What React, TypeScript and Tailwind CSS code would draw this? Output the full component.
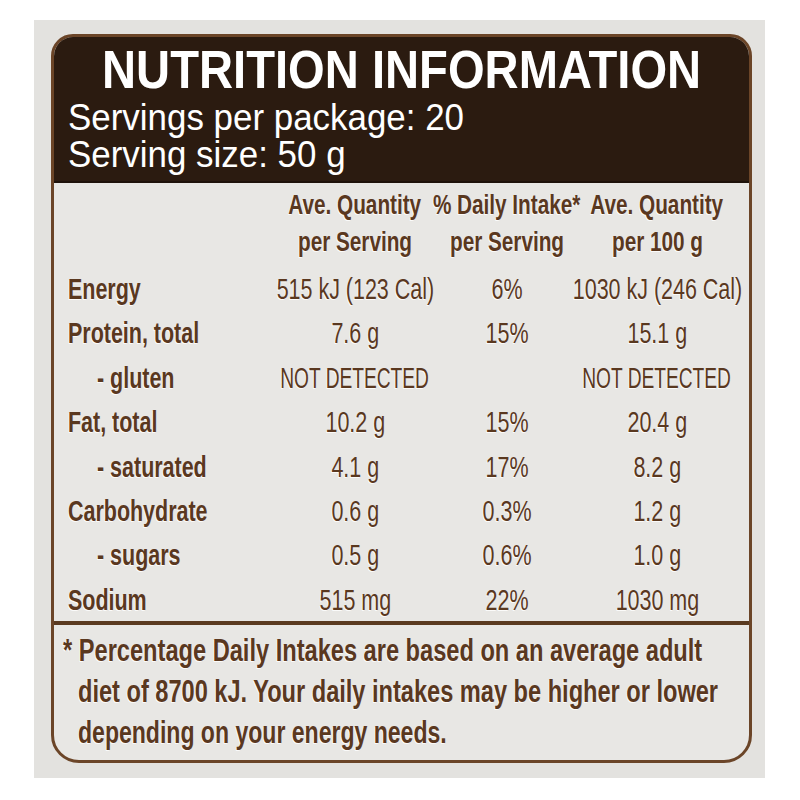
import type { ReactNode } from "react";

const rows = [
  { name: "Energy", indent: false, serving: "515 kJ (123 Cal)", daily: "6%", per100: "1030 kJ (246 Cal)" },
  { name: "Protein, total", indent: false, serving: "7.6 g", daily: "15%", per100: "15.1 g" },
  { name: "- gluten", indent: true, serving: "NOT DETECTED", daily: "", per100: "NOT DETECTED" },
  { name: "Fat, total", indent: false, serving: "10.2 g", daily: "15%", per100: "20.4 g" },
  { name: "- saturated", indent: true, serving: "4.1 g", daily: "17%", per100: "8.2 g" },
  { name: "Carbohydrate", indent: false, serving: "0.6 g", daily: "0.3%", per100: "1.2 g" },
  { name: "- sugars", indent: true, serving: "0.5 g", daily: "0.6%", per100: "1.0 g" },
  { name: "Sodium", indent: false, serving: "515 mg", daily: "22%", per100: "1030 mg" },
];

const footnote = [
  { text: "* Percentage Daily Intakes are based on an average adult", cls: "pl-[9px]", scale: "scale-x-[0.738]" },
  { text: "diet of 8700 kJ. Your daily intakes may be higher or lower", cls: "pl-[24px]", scale: "scale-x-[0.737]" },
  { text: "depending on your energy needs.", cls: "pl-[24px]", scale: "scale-x-[0.72]" },
];

const cols = "grid grid-cols-[212px_150px_154px_146px]";
const ink = "text-[#5a381f] [text-shadow:-1px_1px_0_rgba(255,255,255,0.85)]";

// condensed face isn't installed, so squeeze Liberation Sans sideways
function Narrow({ children, left = false }: { children: ReactNode; left?: boolean }) {
  const caps = children === "NOT DETECTED";
  return (
    <span
      className={`inline-block whitespace-nowrap ${caps ? "scale-x-[0.66]" : "scale-x-[0.74]"} ${
        left ? "origin-left" : "origin-center"
      }`}
    >
      {children}
    </span>
  );
}

function Cell({ children }: { children: ReactNode }) {
  return (
    <div className="flex justify-center">
      <Narrow>{children}</Narrow>
    </div>
  );
}

export default function App() {
  return (
    <div className="h-[800px] w-[800px] bg-white pl-[34px] pt-[20px] font-['Liberation_Sans',Arial,sans-serif]">
      <div className="h-[758px] w-[731px] bg-[#e3e2df] pl-[17px] pt-[14px]">
        <div className="flex h-[729px] w-[701px] flex-col overflow-hidden rounded-t-[22px] rounded-b-[28px] border-[3px] border-[#6b4528] bg-[#e8e7e4]">
          <div className="h-[146px] border-b-[2px] border-[#1e120a] bg-[#2b1b10] pl-[14px] pt-[6px] text-white">
            <div className="flex justify-center pr-[14px]">
              <h1 className="inline-block origin-center scale-x-[0.89] whitespace-nowrap text-[53px] font-bold leading-[53px]">
                NUTRITION INFORMATION
              </h1>
            </div>
            <p className="mt-[3px] origin-left scale-x-[0.97] whitespace-nowrap text-[36px] leading-[37px]">Servings per package: 20</p>
            <p className="origin-left scale-x-[0.97] whitespace-nowrap text-[36px] leading-[37px]">Serving size: 50 g</p>
          </div>

          <div className={`pl-[14px] ${ink}`}>
            <div className={`${cols} pt-[3px] text-[28px] font-bold leading-[37px]`}>
              <div />
              <div>
                <Cell>Ave. Quantity</Cell>
                <Cell>per Serving</Cell>
              </div>
              <div>
                <Cell>% Daily Intake*</Cell>
                <Cell>per Serving</Cell>
              </div>
              <div>
                <Cell>Ave. Quantity</Cell>
                <Cell>per 100 g</Cell>
              </div>
            </div>
            <div className="mt-[7px]">
              {rows.map((r) => (
                <div key={r.name} className={`${cols} h-[44.4px] text-[29px] leading-[44px]`}>
                  <div className={`font-bold ${r.indent ? "pl-[29px]" : ""}`}>
                    <Narrow left>{r.name}</Narrow>
                  </div>
                  <Cell>{r.serving}</Cell>
                  <Cell>{r.daily}</Cell>
                  <Cell>{r.per100}</Cell>
                </div>
              ))}
            </div>
          </div>

          <div className="-mt-[1px] h-[4px] bg-[#5a3a20]" />

          <div className={`pt-[5px] text-[32px] font-bold leading-[41px] ${ink}`}>
            {footnote.map((line) => (
              <div key={line.text} className={line.cls}>
                <span className={`inline-block origin-left whitespace-nowrap ${line.scale}`}>{line.text}</span>
              </div>
            ))}
          </div>
        </div>
      </div>
    </div>
  );
}
